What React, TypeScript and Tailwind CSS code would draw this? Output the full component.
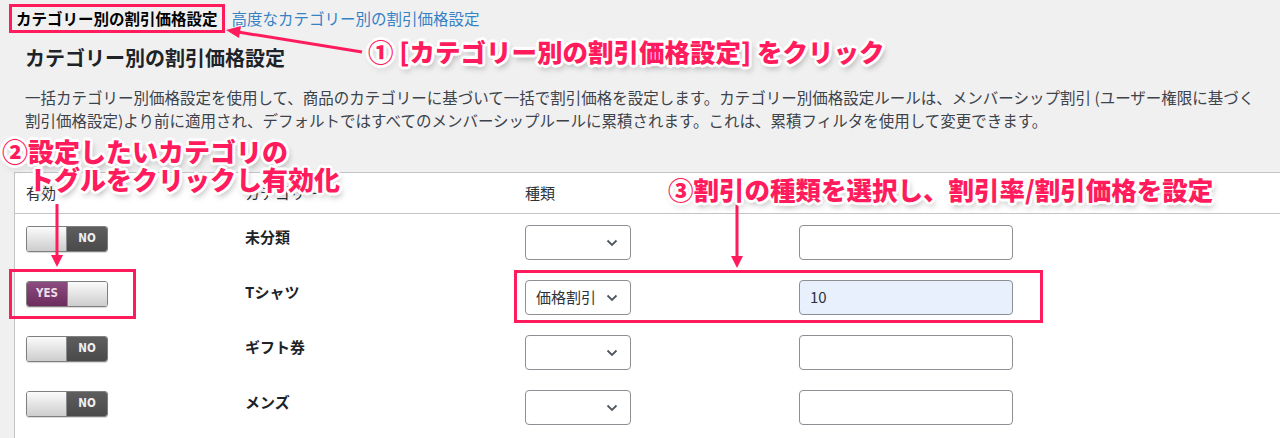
import React from "react";

const F = "font-['Noto_Sans_CJK_JP','Noto_Sans',sans-serif]";

function Toggle({ on }: { on: boolean }) {
  return (
    <div className="w-[82px] h-[26px] rounded-[3px] border border-[#7f7f7f] overflow-hidden flex shadow-[0_1px_1px_rgba(0,0,0,0.15)]">
      {on ? (
        <>
          <div className="w-[40px] h-full bg-linear-to-b from-[#8d4b7f] to-[#6c2d5e] flex items-center justify-center text-[11.5px] font-bold text-[#eadfe7] font-['DejaVu_Sans_Condensed','DejaVu_Sans',sans-serif]">
            YES
          </div>
          <div className="flex-1 h-full bg-linear-to-b from-[#fbfbfb] to-[#cdcdcd] border-l border-[#8a8a8a]" />
        </>
      ) : (
        <>
          <div className="w-[40px] h-full bg-linear-to-b from-[#fbfbfb] to-[#cdcdcd] border-r border-[#8a8a8a]" />
          <div className="flex-1 h-full bg-linear-to-b from-[#5e5e5e] to-[#4a4a4a] flex items-center justify-center text-[11.5px] font-bold text-[#f0f0f0] font-['DejaVu_Sans_Condensed','DejaVu_Sans',sans-serif]">
            NO
          </div>
        </>
      )}
    </div>
  );
}

function Select({ value }: { value?: string }) {
  return (
    <div className="w-[106px] h-[35px] border border-[#8c8f94] rounded-[4px] bg-white flex items-center justify-between pl-[10px] pr-[12px] text-[15px] text-[#2c3338]">
      <span>{value ?? ""}</span>
      <svg width="12" height="8" viewBox="0 0 12 8">
        <polyline points="1.5,1.5 6,6 10.5,1.5" fill="none" stroke="#50575e" strokeWidth="1.8" />
      </svg>
    </div>
  );
}

function Input({ value, filled }: { value?: string; filled?: boolean }) {
  return (
    <div
      className={
        "w-[214px] h-[35px] border border-[#8c8f94] rounded-[4px] flex items-center px-[10px] text-[15px] text-[#2c3338] " +
        (filled ? "bg-[#e8f0fe]" : "bg-white")
      }
    >
      {value ?? ""}
    </div>
  );
}

const rows = [
  { name: "未分類", on: false },
  { name: "Tシャツ", on: true, type: "価格割引", val: "10" },
  { name: "ギフト券", on: false },
  { name: "メンズ", on: false },
];

const ann =
  "absolute text-[#ff1b5c] font-black leading-[28px] whitespace-nowrap [text-shadow:2px_0_0_#fff,-2px_0_0_#fff,0_2px_0_#fff,0_-2px_0_#fff,2px_2px_0_#fff,-2px_-2px_0_#fff,2px_-2px_0_#fff,-2px_2px_0_#fff,3px_0_1px_#fff,-3px_0_1px_#fff,0_3px_1px_#fff,0_-3px_1px_#fff,2px_4px_6px_rgba(0,0,0,0.35)]";

export default function App() {
  return (
    <div className={"relative w-[1280px] h-[438px] overflow-hidden bg-[#f0f0f1] text-[#2c3338] " + F}>
      {/* tabs */}
      <div className="flex items-center gap-[14px] pt-[8px] pl-[16px] text-[15.5px] leading-[20px]">
        <span className="font-bold text-black">カテゴリー別の割引価格設定</span>
        <span className="text-[#3582c4]">高度なカテゴリー別の割引価格設定</span>
      </div>

      <h2 className="mt-[17px] pl-[25px] text-[20px] leading-[26px] font-bold text-[#1d2327]">
        カテゴリー別の割引価格設定
      </h2>

      <p className="mt-[15px] pl-[25px] text-[15.5px] leading-[23px] text-[#3c434a] whitespace-nowrap">
        一括カテゴリー別価格設定を使用して、商品のカテゴリーに基づいて一括で割引価格を設定します。カテゴリー別価格設定ルールは、メンバーシップ割引 (ユーザー権限に基づく
        <br />
        割引価格設定)より前に適用され、デフォルトではすべてのメンバーシップルールに累積されます。これは、累積フィルタを使用して変更できます。
      </p>

      {/* table */}
      <div className="mt-[40px] ml-[14px] pb-[30px] bg-white border-l border-t border-[#c3c4c7]">
        <div className="grid grid-cols-[219px_280px_274px_214px] pl-[11px] h-[41px] items-center border-b border-[#c3c4c7] text-[15px] text-[#2c3338]">
          <div>有効</div>
          <div>カテゴリー</div>
          <div>種類</div>
          <div>割引</div>
        </div>
        {rows.map((r) => (
          <div key={r.name} className="grid grid-cols-[219px_280px_274px_214px] pl-[11px] h-[55px] pt-[12px] items-start">
            <div>
              <Toggle on={r.on} />
            </div>
            <div className="mt-[1px] text-[15px] leading-[20px] font-bold text-[#1d2327]">{r.name}</div>
            <div className="-mt-[1px]">
              <Select value={r.type} />
            </div>
            <div className="-mt-[1px]">
              <Input value={r.val} filled={!!r.val} />
            </div>
          </div>
        ))}
      </div>

      {/* annotation boxes */}
      <div className="absolute left-[9px] top-[4px] w-[216px] h-[29px] border-[3px] border-[#ff1b5c]" />
      <div className="absolute left-[9px] top-[269px] w-[127px] h-[50px] border-[3px] border-[#ff1b5c]" />
      <div className="absolute left-[514px] top-[270px] w-[529px] h-[53px] border-[3px] border-[#ff1b5c]" />

      {/* arrows */}
      <svg className="absolute left-0 top-0 pointer-events-none" width="1280" height="438">
        <line x1="362" y1="52" x2="238" y2="32" stroke="#ff1b5c" strokeWidth="3" />
        <polygon points="226,30 241,26 239,38" fill="#ff1b5c" />
        <line x1="57" y1="204" x2="57" y2="257" stroke="#ff1b5c" strokeWidth="3" />
        <polygon points="51,255 63,255 57,267" fill="#ff1b5c" />
        <line x1="737" y1="200" x2="737" y2="258" stroke="#ff1b5c" strokeWidth="3" />
        <polygon points="731,256 743,256 737,268" fill="#ff1b5c" />
      </svg>

      {/* annotation texts */}
      <div className={ann + " text-[25.5px] left-[368px] top-[37px]"}>① [カテゴリー別の割引価格設定] をクリック</div>
      <div className={ann + " text-[26px] left-[2px] top-[137px]"}>
        <div>②設定したいカテゴリの</div>
        <div className="pl-[26px]">トグルをクリックし有効化</div>
      </div>
      <div className={ann + " text-[25.5px] left-[668px] top-[175px]"}>③割引の種類を選択し、割引率/割引価格を設定</div>
    </div>
  );
}
